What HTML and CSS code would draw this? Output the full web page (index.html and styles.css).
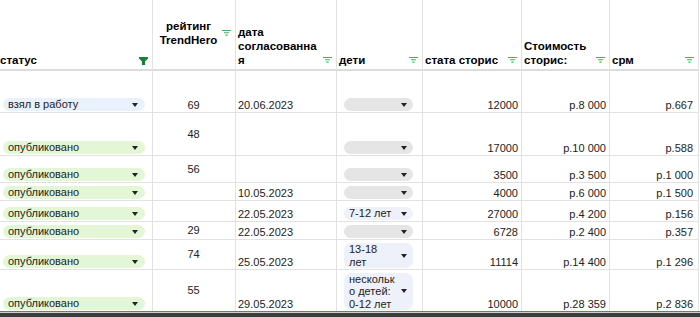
FILE: index.html
```html
<!DOCTYPE html>
<html lang="ru">
<head>
<meta charset="utf-8">
<title>Таблица</title>
<link rel="stylesheet" href="styles.css">
</head>
<body>
<div class="sheet">
  <div class="row head">
    <div class="cell hc first"><span class="htext">статус</span>
      <svg class="funnel" width="9" height="8" viewBox="0 0 9 8"><path d="M0 0H9V1.6L6 4.4V8H3V4.4L0 1.6Z" fill="#188038"/></svg></div>
    <div class="cell hc raised"><span class="htext center"><span class="ln">рейтинг</span><span class="ln">TrendHero</span></span>
      <svg class="flt flt-raised" width="9" height="6" viewBox="0 0 9 6"><path d="M0 .5H9M2 2.8H7M3.4 5.1H5.6" stroke="#4cad5a" stroke-width="1.1"/></svg></div>
    <div class="cell hc"><span class="htext">дата<br>согласованна<br>я</span>
      <svg class="flt" width="9" height="6" viewBox="0 0 9 6"><path d="M0 .5H9M2 2.8H7M3.4 5.1H5.6" stroke="#4cad5a" stroke-width="1.1"/></svg></div>
    <div class="cell hc"><span class="htext">дети</span>
      <svg class="flt" width="9" height="6" viewBox="0 0 9 6"><path d="M0 .5H9M2 2.8H7M3.4 5.1H5.6" stroke="#4cad5a" stroke-width="1.1"/></svg></div>
    <div class="cell hc"><span class="htext">стата сторис</span>
      <svg class="flt" width="9" height="6" viewBox="0 0 9 6"><path d="M0 .5H9M2 2.8H7M3.4 5.1H5.6" stroke="#4cad5a" stroke-width="1.1"/></svg></div>
    <div class="cell hc"><span class="htext">Стоимость<br>сторис:</span>
      <svg class="flt" width="9" height="6" viewBox="0 0 9 6"><path d="M0 .5H9M2 2.8H7M3.4 5.1H5.6" stroke="#4cad5a" stroke-width="1.1"/></svg></div>
    <div class="cell hc"><span class="htext">срм</span>
      <svg class="flt" width="9" height="6" viewBox="0 0 9 6"><path d="M0 .5H9M2 2.8H7M3.4 5.1H5.6" stroke="#4cad5a" stroke-width="1.1"/></svg></div>
  </div>

  <div class="row r42">
    <div class="cell pc"><div class="pill st blue"><span>взял в работу</span><i class="arr"></i></div></div>
    <div class="cell c">69</div>
    <div class="cell">20.06.2023</div>
    <div class="cell pc"><div class="pill kid gray"><span></span><i class="arr"></i></div></div>
    <div class="cell n">12000</div>
    <div class="cell n">р.8 000</div>
    <div class="cell n last">р.667</div>
  </div>

  <div class="row r43">
    <div class="cell pc"><div class="pill st green"><span>опубликовано</span><i class="arr"></i></div></div>
    <div class="cell c mid">48</div>
    <div class="cell"></div>
    <div class="cell pc"><div class="pill kid gray"><span></span><i class="arr"></i></div></div>
    <div class="cell n">17000</div>
    <div class="cell n">р.10 000</div>
    <div class="cell n last">р.588</div>
  </div>

  <div class="row r27">
    <div class="cell pc"><div class="pill st green"><span>опубликовано</span><i class="arr"></i></div></div>
    <div class="cell c mid">56</div>
    <div class="cell"></div>
    <div class="cell pc"><div class="pill kid gray"><span></span><i class="arr"></i></div></div>
    <div class="cell n">3500</div>
    <div class="cell n">р.3 500</div>
    <div class="cell n last">р.1 000</div>
  </div>

  <div class="row r18">
    <div class="cell pc"><div class="pill st green"><span>опубликовано</span><i class="arr"></i></div></div>
    <div class="cell c mid"></div>
    <div class="cell">10.05.2023</div>
    <div class="cell pc"><div class="pill kid gray"><span></span><i class="arr"></i></div></div>
    <div class="cell n">4000</div>
    <div class="cell n">р.6 000</div>
    <div class="cell n last">р.1 500</div>
  </div>

  <div class="row r21">
    <div class="cell pc"><div class="pill st green"><span>опубликовано</span><i class="arr"></i></div></div>
    <div class="cell c mid"></div>
    <div class="cell">22.05.2023</div>
    <div class="cell pc"><div class="pill kid lav"><span>7-12 лет</span><i class="arr"></i></div></div>
    <div class="cell n">27000</div>
    <div class="cell n">р.4 200</div>
    <div class="cell n last">р.156</div>
  </div>

  <div class="row r18">
    <div class="cell pc"><div class="pill st green"><span>опубликовано</span><i class="arr"></i></div></div>
    <div class="cell c mid">29</div>
    <div class="cell">22.05.2023</div>
    <div class="cell pc"><div class="pill kid gray"><span></span><i class="arr"></i></div></div>
    <div class="cell n">6728</div>
    <div class="cell n">р.2 400</div>
    <div class="cell n last">р.357</div>
  </div>

  <div class="row r30">
    <div class="cell pc"><div class="pill st green"><span>опубликовано</span><i class="arr"></i></div></div>
    <div class="cell c mid">74</div>
    <div class="cell">25.05.2023</div>
    <div class="cell pc"><div class="pill kid lav"><span>13-18<br>лет</span><i class="arr"></i></div></div>
    <div class="cell n">11114</div>
    <div class="cell n">р.14 400</div>
    <div class="cell n last">р.1 296</div>
  </div>

  <div class="row r41 lastrow">
    <div class="cell pc"><div class="pill st green"><span>опубликовано</span><i class="arr"></i></div></div>
    <div class="cell c mid">55</div>
    <div class="cell">29.05.2023</div>
    <div class="cell pc"><div class="pill kid lav"><span>нескольк<br>о детей:<br>0-12 лет</span><i class="arr"></i></div></div>
    <div class="cell n">10000</div>
    <div class="cell n">р.28 359</div>
    <div class="cell n last">р.2 836</div>
  </div>

  <div class="sheet-end"></div>
  <div class="bottom-bar"></div>
</div>
</body>
</html>
```

FILE: styles.css
```css
html, body {
  margin: 0;
  padding: 0;
}
body {
  width: 700px;
  height: 317px;
  overflow: hidden;
  background: #fff;
  font-family: "Liberation Sans", Arial, sans-serif;
  color: #222;
}
.sheet {
  display: flex;
  flex-direction: column;
  height: 317px;
}
.row {
  display: grid;
  grid-template-columns: 153px 83px 101px 86px 99px 88px 89px;
}
.head { height: 71px; }
.r42 { height: 42px; }
.r43 { height: 43px; }
.r27 { height: 27px; }
.r18 { height: 18px; }
.r21 { height: 21px; }
.r30 { height: 30px; }
.r41 { height: 41px; }

.cell {
  box-sizing: border-box;
  display: flex;
  align-items: flex-end;
  min-width: 0;
  overflow: hidden;
  border-right: 1px solid #e2e2e2;
  border-bottom: 1px solid #e2e2e2;
  padding: 0 3px 0 2px;
  font-size: 11px;
  line-height: 13px;
  white-space: nowrap;
}
.lastrow .cell { border-bottom: none; }

.hc {
  border-bottom: 2px solid #dcdcdc;
  font-weight: bold;
  font-size: 11.5px;
  line-height: 14px;
  color: #000;
  padding: 0 4px 2px 2px;
}
.hc.first { padding-left: 0; }
.hc.raised {
  align-items: flex-start;
  padding-top: 19px;
  padding-bottom: 0;
}
.htext { flex: 1; }
.htext.center { text-align: center; }
.ln { display: block; height: 14px; }
.funnel { margin-bottom: 2px; flex: none; }
.flt { margin-bottom: 4px; flex: none; }
.flt.flt-raised { margin: 11px 0 0; }

.mid { align-items: center; }
.c { justify-content: center; }
.n { justify-content: flex-end; }
.n.last { padding-right: 5px; }

.pc { padding: 0; }
.pill {
  flex: 1;
  display: flex;
  align-items: center;
  justify-content: space-between;
  box-sizing: border-box;
  min-height: 13px;
  margin-bottom: 1px;
  border-radius: 7px;
  padding-left: 5px;
  line-height: 12.5px;
  color: #222;
}
.pill.st { margin-left: 3px; margin-right: 7px; padding-right: 7px; }
.pill.kid { margin-left: 7px; margin-right: 9px; padding-right: 6px; }
.blue { background: #e8f1fc; }
.green { background: #e3f7d6; }
.gray { background: #e5e5e5; }
.lav { background: #eef1fa; }
.arr {
  flex: none;
  width: 0;
  height: 0;
  border-left: 3px solid transparent;
  border-right: 3px solid transparent;
  border-top: 4px solid #222;
}

.sheet-end {
  height: 1px;
  background: #3c9a4c;
  flex: none;
}
.bottom-bar {
  flex: 1;
  border-top: 1px solid #cfcfcf;
  background: #3c3c3c;
}
```
